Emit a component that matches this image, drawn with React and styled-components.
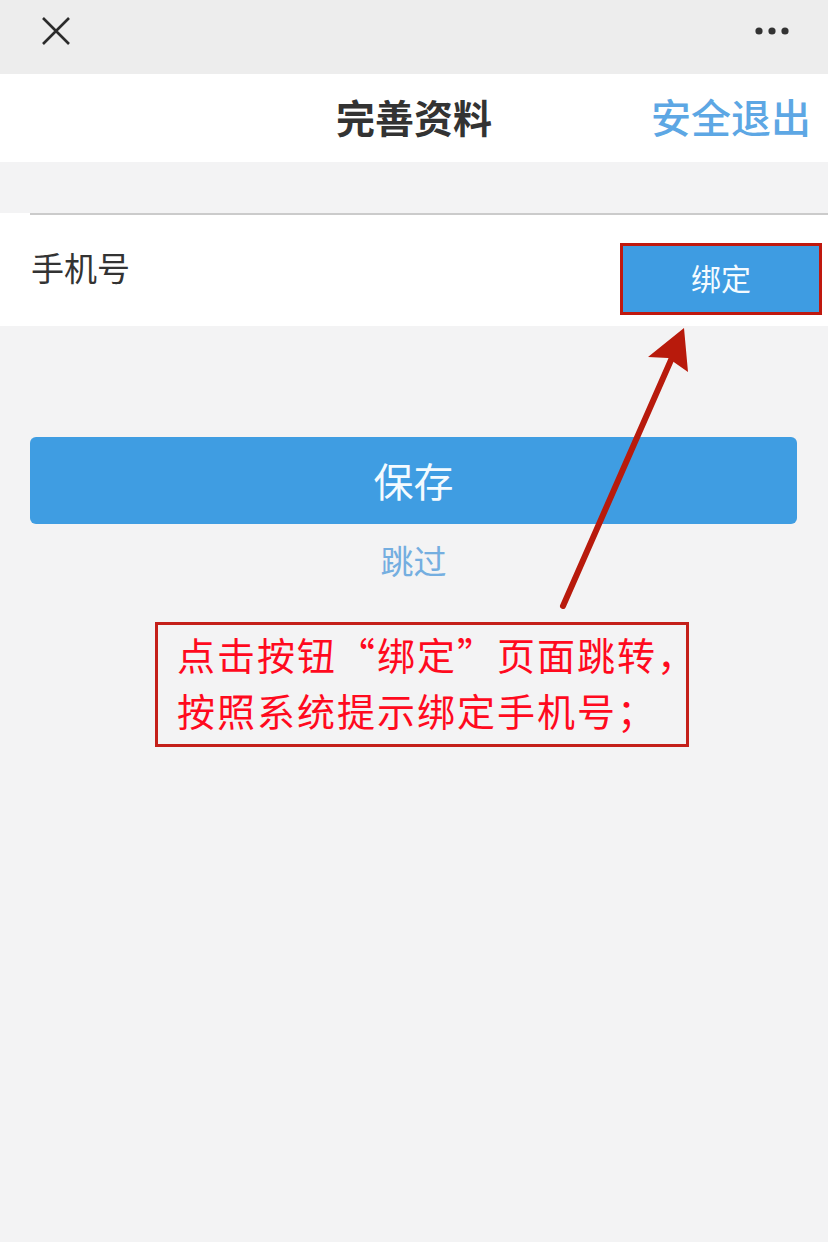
import React from 'react';
import styled, { createGlobalStyle } from 'styled-components';

const Global = createGlobalStyle`
  html, body {
    margin: 0;
    padding: 0;
    background: #f3f3f4;
  }
  body {
    font-family: "Noto Sans CJK SC", "Noto Sans", sans-serif;
  }
`;

const Page = styled.div`
  position: relative;
  width: 828px;
  min-height: 1242px;
  background: #f3f3f4;
  overflow: hidden;
`;

const TopBar = styled.div`
  height: 74px;
  background: #ededed;
  display: flex;
  align-items: center;
  justify-content: space-between;
  padding: 0 36px 0 40px;
  box-sizing: border-box;
`;

const IconBtn = styled.div`
  display: flex;
  align-items: center;
  margin-top: ${(p) => p.$top || 0}px;
`;

const Header = styled.header`
  height: 88px;
  background: #fff;
  position: relative;
  display: flex;
  align-items: center;
  justify-content: center;
  & > h1 {
    margin: -4px 0 0;
    font-size: 39px;
    font-weight: 700;
    color: #333;
  }
`;

const Logout = styled.span`
  position: absolute;
  right: 17px;
  top: 50%;
  transform: translateY(-54%);
  font-size: 40px;
  font-weight: 500;
  color: #5da7e4;
`;

const Section = styled.section`
  margin-top: 51px;
  background: #fff;
  height: 113px;
  padding-left: 30px;
`;

const Row = styled.div`
  height: 100%;
  border-top: 2px solid #cbcbcb;
  box-sizing: border-box;
  display: flex;
  align-items: center;
  justify-content: space-between;
  padding-right: 6px;
`;

const Label = styled.span`
  font-size: 33px;
  color: #333;
  margin-top: -8px;
  margin-left: 1px;
`;

const BindButton = styled.button`
  width: 202px;
  height: 72px;
  margin-top: 16px;
  background: #3e9ce2;
  border: 3px solid #c0180e;
  color: #f4fbff;
  font-family: inherit;
  font-size: 30px;
  box-sizing: border-box;
  padding: 0 0 4px;
`;

const Actions = styled.div`
  padding: 111px 31px 0 30px;
  display: flex;
  flex-direction: column;
  align-items: center;
`;

const SaveButton = styled.button`
  width: 100%;
  height: 87px;
  border: none;
  border-radius: 6px;
  background: #3f9de2;
  color: #f4fbff;
  font-family: inherit;
  font-size: 40px;
  padding: 0 0 2px;
`;

const Skip = styled.span`
  margin-top: 12px;
  font-size: 33px;
  color: #74aee0;
`;

const Note = styled.div`
  position: absolute;
  left: 155px;
  top: 622px;
  width: 534px;
  height: 125px;
  box-sizing: border-box;
  border: 3px solid #c4201a;
  padding: 1px 0 0 19px;
  color: #ff0a1e;
  font-size: 38px;
  line-height: 56px;
  letter-spacing: 2px;
  white-space: nowrap;
`;

const Arrow = styled.svg`
  position: absolute;
  left: 0;
  top: 0;
  pointer-events: none;
`;

const CloseIcon = () => (
  <svg width="32" height="32" viewBox="0 0 32 32">
    <path d="M3 3 L29 29 M29 3 L3 29" stroke="#2b2b2b" strokeWidth="2.6" fill="none" />
  </svg>
);

const MoreIcon = () => (
  <svg width="38" height="10" viewBox="0 0 38 10">
    <circle cx="5" cy="5" r="3.6" fill="#333" />
    <circle cx="18" cy="5" r="3.6" fill="#333" />
    <circle cx="31" cy="5" r="3.6" fill="#333" />
  </svg>
);

export default function App() {
  return (
    <Page>
      <Global />
      <TopBar>
        <IconBtn $top={-13}><CloseIcon /></IconBtn>
        <IconBtn $top={-12}><MoreIcon /></IconBtn>
      </TopBar>
      <Header>
        <h1>完善资料</h1>
        <Logout>安全退出</Logout>
      </Header>
      <Section>
        <Row>
          <Label>手机号</Label>
          <BindButton>绑定</BindButton>
        </Row>
      </Section>
      <Actions>
        <SaveButton>保存</SaveButton>
        <Skip>跳过</Skip>
      </Actions>
      <Note>
        点击按钮“绑定”页面跳转，<br />
        按照系统提示绑定手机号；
      </Note>
      <Arrow width="828" height="1242" viewBox="0 0 828 1242">
        <path d="M563 606 L671 360" stroke="#b81a0c" strokeWidth="6" strokeLinecap="round" fill="none" />
        <path d="M684 328 L648 357 L668 358 L688 372 Z" fill="#b81a0c" />
      </Arrow>
    </Page>
  );
}
